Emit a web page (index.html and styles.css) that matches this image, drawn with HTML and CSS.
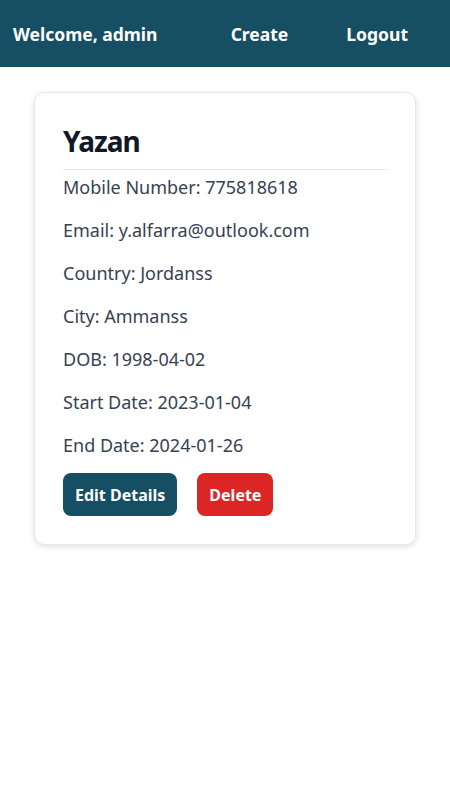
FILE: index.html
```html
<!DOCTYPE html>
<html lang="en">
<head>
<meta charset="utf-8">
<title>Profile</title>
<link rel="stylesheet" href="styles.css">
</head>
<body>
<nav class="nav">
  <span class="nav-welcome">Welcome, admin</span>
  <div class="nav-links">
    <a class="nav-link" href="#">Create</a>
    <a class="nav-link" href="#">Logout</a>
  </div>
</nav>
<main class="main">
  <section class="card">
    <h1 class="card-title">Yazan</h1>
    <p class="field">Mobile Number: 775818618</p>
    <p class="field">Email: y.alfarra@outlook.com</p>
    <p class="field">Country: Jordanss</p>
    <p class="field">City: Ammanss</p>
    <p class="field">DOB: 1998-04-02</p>
    <p class="field">Start Date: 2023-01-04</p>
    <p class="field">End Date: 2024-01-26</p>
    <div class="actions">
      <button class="btn btn-edit">Edit Details</button>
      <button class="btn btn-delete">Delete</button>
    </div>
  </section>
</main>
</body>
</html>
```

FILE: styles.css
```css
* { box-sizing: border-box; }
body {
  margin: 0;
  font-family: "Noto Sans", "Open Sans", sans-serif;
  background: #ffffff;
}
.nav {
  height: 67px;
  background: #164e63;
  color: #ffffff;
  display: flex;
  align-items: center;
  justify-content: space-between;
  padding: 0 42px 0 13px;
}
.nav-welcome {
  font-size: 17.5px;
  font-weight: 700;
}
.nav-links {
  display: flex;
  gap: 58px;
}
.nav-link {
  color: #ffffff;
  text-decoration: none;
  font-size: 17.5px;
  font-weight: 700;
}
.main {
  padding: 25px 34px;
}
.card {
  border: 1px solid #e5e7eb;
  border-radius: 10px;
  box-shadow: 0 2px 6px rgba(0,0,0,0.12);
  padding: 28px;
  background: #ffffff;
}
.card-title {
  margin: 0;
  font-size: 28px;
  font-weight: 700;
  letter-spacing: -1px;
  color: #111827;
  line-height: 36px;
  padding-top: 2px;
  padding-bottom: 10px;
  border-bottom: 1px solid #e5e7eb;
}
.field {
  margin: 16px 0 0;
  font-size: 18px;
  line-height: 27px;
  color: #374151;
}
.card-title + .field {
  margin-top: 4px;
}
.actions {
  display: flex;
  gap: 20px;
  margin-top: 14px;
}
.btn {
  height: 43px;
  border: none;
  border-radius: 8px;
  padding: 0 12px;
  color: #ffffff;
  font-family: inherit;
  font-size: 16px;
  font-weight: 700;
}
.btn-edit { background: #164e63; }
.btn-delete { background: #dc2626; }
```
